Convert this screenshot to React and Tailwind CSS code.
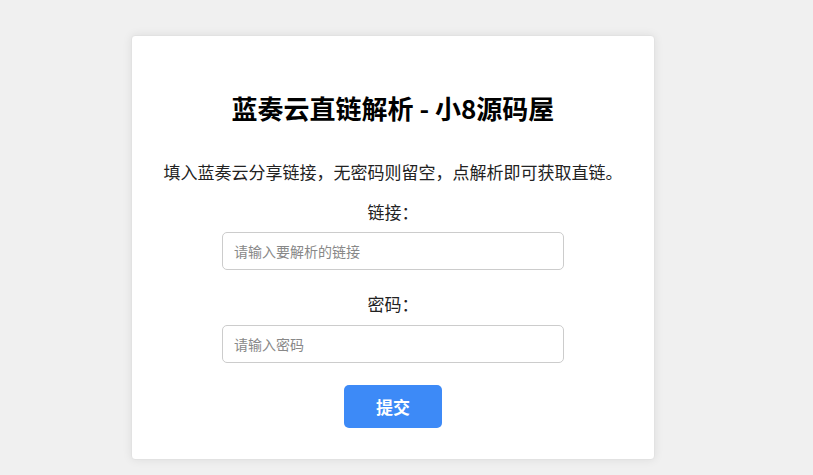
export default function App() {
  return (
    <div
      className="min-h-[475px] bg-[#f0f0f0] pt-[35px] pb-4"
      style={{ fontFamily: '"Noto Sans CJK SC", "Noto Sans", sans-serif' }}
    >
      <div className="ml-[131px] w-[524px] h-[425px] bg-white rounded-[4px] border border-[#e2e2e2] shadow-[0_0_10px_rgba(0,0,0,0.08)] flex flex-col items-center pt-[54px]">
        <h1 className="text-[26px] font-bold text-black leading-[36px]">蓝奏云直链解析 - 小8源码屋</h1>
        <p className="mt-[33px] text-[17px] text-[#222] leading-[26px]">
          填入蓝奏云分享链接，无密码则留空，点解析即可获取直链。
        </p>
        <label className="mt-[14px] text-[17px] text-[#222] leading-[26px]">链接：</label>
        <input
          type="text"
          placeholder="请输入要解析的链接"
          className="mt-[7px] w-[342px] h-[38px] border border-[#ccc] rounded-[5px] px-[11px] text-[14px] placeholder:text-[#888] outline-none"
        />
        <label className="mt-[21px] text-[17px] text-[#222] leading-[26px]">密码：</label>
        <input
          type="text"
          placeholder="请输入密码"
          className="mt-[8px] w-[342px] h-[38px] border border-[#ccc] rounded-[5px] px-[11px] text-[14px] placeholder:text-[#888] outline-none"
        />
        <button className="mt-[22px] w-[98px] h-[43px] bg-[#3d8af7] rounded-[5px] text-white text-[17px] font-bold">
          提交
        </button>
      </div>
    </div>
  );
}
